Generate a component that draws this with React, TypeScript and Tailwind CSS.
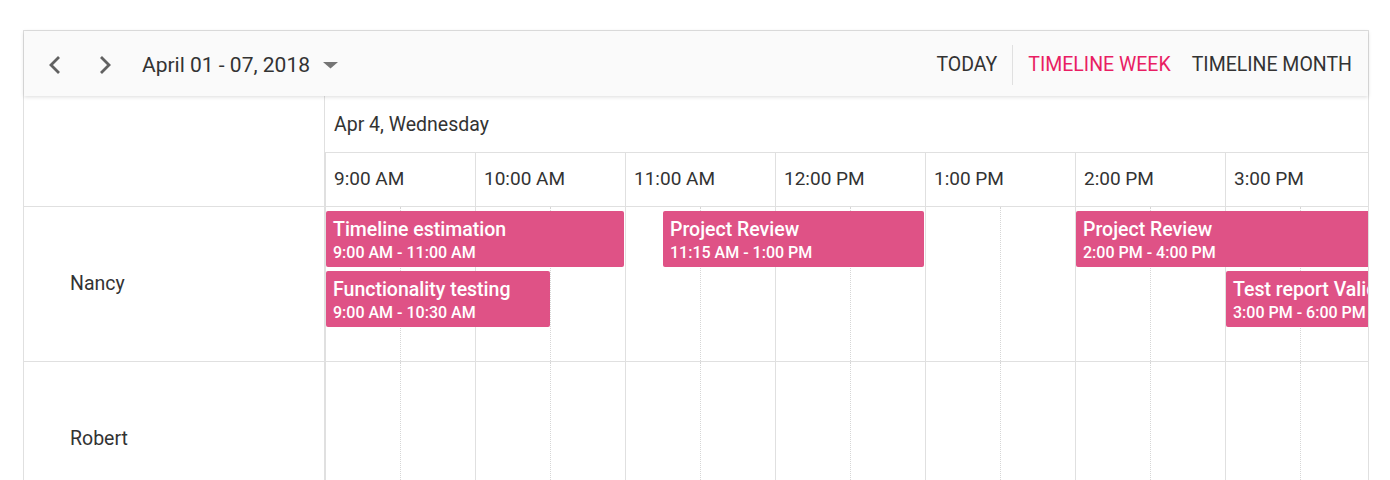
import React from "react";

const hours = ["9:00 AM", "10:00 AM", "11:00 AM", "12:00 PM", "1:00 PM", "2:00 PM", "3:00 PM"];

type Ev = { title: string; time: string; left: number; width: number; top: number };

const events: Ev[] = [
  { title: "Timeline estimation", time: "9:00 AM - 11:00 AM", left: 1, width: 298, top: 4 },
  { title: "Project Review", time: "11:15 AM - 1:00 PM", left: 338, width: 261, top: 4 },
  { title: "Functionality testing", time: "9:00 AM - 10:30 AM", left: 1, width: 224, top: 64 },
  { title: "Project Review", time: "2:00 PM - 4:00 PM", left: 751, width: 298, top: 4 },
  { title: "Test report Validation", time: "3:00 PM - 6:00 PM", left: 901, width: 448, top: 64 },
];

function WorkCells() {
  return (
    <div className="flex h-full">
      {hours.map((h) => (
        <div key={h} className="flex h-full w-[150px] shrink-0 border-l border-[#e0e0e0]">
          <div className="h-full w-[75px] border-r border-dotted border-[#d6d6d6]" />
          <div className="h-full flex-1" />
        </div>
      ))}
    </div>
  );
}

export default function App() {
  return (
    <div className="h-[480px] w-[1390px] overflow-hidden bg-white pl-[23px] pt-[30px] text-[#333]" style={{ fontFamily: "Roboto, 'Noto Sans', sans-serif" }}>
      <div className="w-[1346px] border border-[#e0e0e0]">
        {/* toolbar */}
        <div className="relative z-10 flex h-[65px] items-center bg-[#fafafa] pt-[2px] shadow-[0_1px_4px_rgba(0,0,0,0.14)]">
          <div className="flex items-center pl-[11px]">
            <button className="flex h-[40px] w-[40px] items-center justify-center">
              <svg width="14" height="20" viewBox="0 0 14 20">
                <polyline points="11,2 3,10 11,18" fill="none" stroke="#616161" strokeWidth="2.8" />
              </svg>
            </button>
            <button className="ml-[10px] flex h-[40px] w-[40px] items-center justify-center">
              <svg width="14" height="20" viewBox="0 0 14 20">
                <polyline points="3,2 11,10 3,18" fill="none" stroke="#616161" strokeWidth="2.8" />
              </svg>
            </button>
            <div className="ml-[17px] flex items-center">
              <span className="text-[21px] leading-[24px] text-[#333]">April 01 - 07, 2018</span>
              <svg className="ml-[12px]" width="17" height="8" viewBox="0 0 17 8">
                <polygon points="1,1 16,1 8.5,7.5" fill="#757575" />
              </svg>
            </div>
          </div>
          <div className="ml-auto flex items-center pr-[16px] text-[19.5px] leading-[24px]">
            <span className="text-[#333]">TODAY</span>
            <div className="mx-[15px] h-[40px] w-px bg-[#e0e0e0]" />
            <span className="text-[#e91e63]">TIMELINE WEEK</span>
            <span className="ml-[21px] text-[#333]">TIMELINE MONTH</span>
          </div>
        </div>

        {/* body */}
        <div className="flex">
          {/* resources */}
          <div className="w-[301px] shrink-0 border-r border-[#e0e0e0]">
            <div className="h-[111px] border-b border-[#e0e0e0]" />
            <div className="flex h-[155px] items-center border-b border-[#e0e0e0] pl-[46px] text-[19.5px]">Nancy</div>
            <div className="flex h-[155px] items-center border-b border-[#e0e0e0] pl-[46px] text-[19.5px]">Robert</div>
          </div>

          {/* timeline */}
          <div className="w-[1043px] overflow-hidden">
            <div className="w-[1050px]">
              <div className="flex h-[57px] items-center border-b border-[#e0e0e0] pl-[9px] pt-[2px] text-[19.5px]">Apr 4, Wednesday</div>
              <div className="flex h-[54px] border-b border-[#e0e0e0]">
                {hours.map((h) => (
                  <div key={h} className="flex w-[150px] shrink-0 items-center border-l border-[#e0e0e0] pl-[8px] text-[19px]">
                    {h}
                  </div>
                ))}
              </div>
              <div className="relative h-[155px] border-b border-[#e0e0e0]">
                <WorkCells />
                {events.map((e, i) => (
                  <div
                    key={i}
                    className="absolute h-[56px] overflow-hidden whitespace-nowrap rounded-[2px] bg-[#df5286] pl-[7px] pt-[7px] text-white"
                    style={{ left: e.left, width: e.width, top: e.top }}
                  >
                    <div className="text-[19.5px] font-medium leading-[24px]">{e.title}</div>
                    <div className="mt-[1px] text-[16px] font-medium leading-[20px]">{e.time}</div>
                  </div>
                ))}
              </div>
              <div className="h-[155px] border-b border-[#e0e0e0]">
                <WorkCells />
              </div>
            </div>
          </div>
        </div>
      </div>
    </div>
  );
}
